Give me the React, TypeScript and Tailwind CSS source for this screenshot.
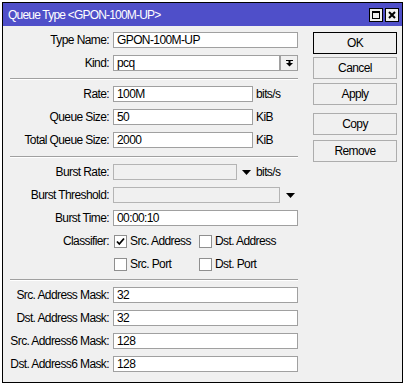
import React from "react";

const Input = ({ className = "", value = "", disabled = false }: { className?: string; value?: string; disabled?: boolean }) => (
  <div
    className={`h-[16px] border border-[#a0a0a0] pl-[3px] text-[12px] leading-[14px] whitespace-nowrap overflow-hidden ${
      disabled ? "bg-[#f0f0f0] border-[#b4b4b4]" : "bg-white"
    } ${className}`}
  >
    {value}
  </div>
);

const Row = ({ label, children, className = "" }: { label: string; children?: React.ReactNode; className?: string }) => (
  <div className={`flex h-[16px] items-center ${className}`}>
    <div className="w-[107px] shrink-0 pr-[1px] text-right whitespace-nowrap leading-[16px]">{label}</div>
    <div className="ml-[3px] flex h-full items-center">{children}</div>
  </div>
);

const Sep = ({ className = "" }: { className?: string }) => (
  <div className={`ml-[7px] h-[2px] w-[288px] border-t border-t-[#a0a0a0] border-b border-b-white ${className}`} />
);

const Tri = ({ className = "" }: { className?: string }) => (
  <svg width="9" height="5" viewBox="0 0 9 5" className={className}>
    <path d="M0 0 L9 0 L4.5 5 Z" fill="#000" />
  </svg>
);

const Check = ({ checked = false, label, className = "" }: { checked?: boolean; label: string; className?: string }) => (
  <div className={`flex items-center ${className}`}>
    <div className="flex h-[13px] w-[13px] items-center justify-center border border-[#8f8f8f] bg-white">
      {checked && (
        <svg width="9" height="9" viewBox="0 0 9 9">
          <path d="M1 4.5 L3.3 7 L8 1.5" stroke="#000" strokeWidth="1.8" fill="none" />
        </svg>
      )}
    </div>
    <span className="ml-[3px] leading-[16px] whitespace-nowrap">{label}</span>
  </div>
);

const Btn = ({ label, primary = false, className = "" }: { label: string; primary?: boolean; className?: string }) => (
  <div
    className={`flex h-[22px] w-[84px] items-center justify-center border bg-[#f0f0f0] ${
      primary ? "border-black" : "border-[#adadad]"
    } ${className}`}
  >
    {label}
  </div>
);

export default function App() {
  return (
    <div className="h-[386px] w-[405px] overflow-hidden bg-white pl-[2px] pt-[2px] font-['Liberation_Sans',Arial,sans-serif] text-[12px] tracking-[-0.6px] text-black">
      <div className="flex h-[381px] w-[401px] flex-col border border-black bg-[#f0f0f0]">
        {/* title bar */}
        <div className="flex h-[23px] shrink-0 items-center bg-[#4f4fc9] pl-[5px] pr-[3px]">
          <span className="text-[12px] tracking-[-0.8px] text-white whitespace-nowrap">Queue Type &lt;GPON-100M-UP&gt;</span>
          <div className="ml-auto flex gap-[2px]">
            <div className="flex h-[14px] w-[14px] items-center justify-center border border-black bg-[#f0f0f0]">
              <div className="h-[8px] w-[8px] border border-black border-t-2" />
            </div>
            <div className="flex h-[14px] w-[14px] items-center justify-center border border-black bg-[#f0f0f0]">
              <svg width="8" height="8" viewBox="0 0 8 8">
                <path d="M1 1 L7 7 M7 1 L1 7" stroke="#000" strokeWidth="2" />
              </svg>
            </div>
          </div>
        </div>

        {/* body */}
        <div className="flex flex-1">
          <div className="flex w-[310px] flex-col pt-[6px]">
            <Row label="Type Name:">
              <Input className="w-[185px]" value="GPON-100M-UP" />
            </Row>
            <Row label="Kind:" className="mt-[7px]">
              <Input className="w-[167px]" value="pcq" />
              <div className="flex h-[16px] w-[18px] items-center justify-center border border-[#a0a0a0] bg-[#f0f0f0]">
                <svg width="7" height="7" viewBox="0 0 7 7">
                  <rect x="0" y="0" width="7" height="1" fill="#000" />
                  <rect x="2.5" y="1" width="2" height="2" fill="#000" />
                  <path d="M0 3 L7 3 L3.5 6.5 Z" fill="#000" />
                </svg>
              </div>
            </Row>
            <Sep className="mt-[7px]" />
            <Row label="Rate:" className="mt-[6px]">
              <Input className="w-[140px]" value="100M" />
              <span className="ml-[3px]">bits/s</span>
            </Row>
            <Row label="Queue Size:" className="mt-[7px]">
              <Input className="w-[140px]" value="50" />
              <span className="ml-[3px]">KiB</span>
            </Row>
            <Row label="Total Queue Size:" className="mt-[7px]">
              <Input className="w-[140px]" value="2000" />
              <span className="ml-[3px]">KiB</span>
            </Row>
            <Sep className="mt-[8px]" />
            <Row label="Burst Rate:" className="mt-[6px]">
              <Input className="w-[124px]" disabled />
              <Tri className="ml-[5px]" />
              <span className="ml-[5px]">bits/s</span>
            </Row>
            <Row label="Burst Threshold:" className="mt-[7px]">
              <Input className="w-[167px]" disabled />
              <Tri className="ml-[6px]" />
            </Row>
            <Row label="Burst Time:" className="mt-[7px]">
              <Input className="w-[185px]" value="00:00:10" />
            </Row>
            <Row label="Classifier:" className="mt-[7px]">
              <Check checked label="Src. Address" className="ml-[1px] w-[85px]" />
              <Check label="Dst. Address" />
            </Row>
            <Row label="" className="mt-[7px]">
              <Check label="Src. Port" className="ml-[1px] w-[85px]" />
              <Check label="Dst. Port" />
            </Row>
            <Sep className="mt-[7px]" />
            <Row label="Src. Address Mask:" className="mt-[6px]">
              <Input className="w-[185px]" value="32" />
            </Row>
            <Row label="Dst. Address Mask:" className="mt-[7px]">
              <Input className="w-[185px]" value="32" />
            </Row>
            <Row label="Src. Address6 Mask:" className="mt-[7px]">
              <Input className="w-[185px]" value="128" />
            </Row>
            <Row label="Dst. Address6 Mask:" className="mt-[7px]">
              <Input className="w-[185px]" value="128" />
            </Row>
          </div>

          <div className="flex flex-col pt-[6px]">
            <Btn label="OK" primary />
            <Btn label="Cancel" className="mt-[3px]" />
            <Btn label="Apply" className="mt-[4px]" />
            <Btn label="Copy" className="mt-[8px]" />
            <Btn label="Remove" className="mt-[5px]" />
          </div>
        </div>
      </div>
    </div>
  );
}
